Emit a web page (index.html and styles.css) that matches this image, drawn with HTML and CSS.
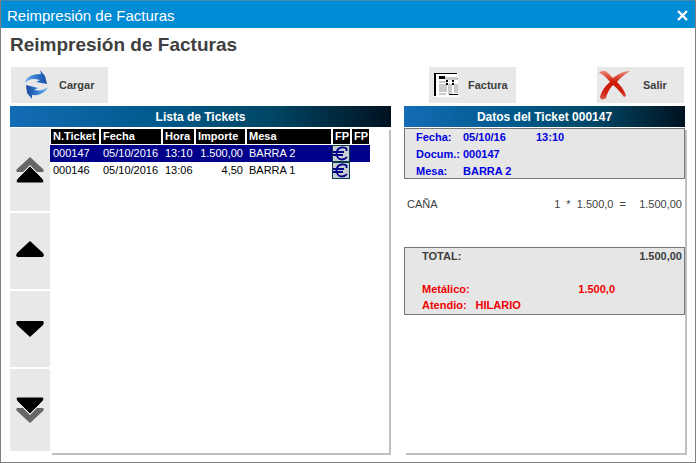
FILE: index.html
```html
<!DOCTYPE html>
<html lang="es">
<head>
    <meta charset="UTF-8">
    <meta name="viewport" content="width=device-width, initial-scale=1.0">
    <title>Reimpresión de Facturas</title>
    <link rel="stylesheet" href="styles.css">
</head>
<body>
    <div class="window">
        <header class="titlebar">
            <span>Reimpresión de Facturas</span>
            <button class="close" type="button" aria-label="Cerrar">
                <svg width="11" height="11" viewBox="0 0 11 11"><path d="M1 1L10 10M10 1L1 10" stroke="#fff" stroke-width="2.4"/></svg>
            </button>
        </header>

        <main class="content">
            <h1>Reimpresión de Facturas</h1>

            <div class="tools">
                <button class="tool tool-wide" type="button">
                    <svg width="24" height="30" viewBox="0 0 24 30">
                        <defs>
                            <linearGradient id="blueTop" x1="0" y1="0" x2="1" y2="0">
                                <stop offset="0" stop-color="#6db4ee"/>
                                <stop offset="0.6" stop-color="#2b6cc4"/>
                                <stop offset="1" stop-color="#1c4fa6"/>
                            </linearGradient>
                            <linearGradient id="blueBottom" x1="0" y1="0" x2="1" y2="0">
                                <stop offset="0" stop-color="#1b4a9c"/>
                                <stop offset="0.5" stop-color="#2f7ad0"/>
                                <stop offset="1" stop-color="#7cc0f4"/>
                            </linearGradient>
                        </defs>
                        <path d="M0 13C1 7 7 4 16 4L15 0L20 6L22 14L11 12L15 10C8 8 4 9 0 13Z" fill="url(#blueTop)"/>
                        <path d="M23 17C21 22 15 26 7 25L7 29L2 23L1 15L13 18L9 20C15 21 19 20 23 17Z" fill="url(#blueBottom)"/>
                    </svg>
                    <span>Cargar</span>
                </button>
            </div>
            <div class="tools tools-right">
                <button class="tool tool-invoice" type="button">
                    <svg width="24" height="24" viewBox="0 0 24 24" shape-rendering="crispEdges">
                        <path d="M0 0H24V24H0Z" fill="#fff"/>
                        <path d="M11 4H24V7H11ZM5 8H12V10H5ZM5 11H13V19H5ZM5 20H12V22H5ZM14 11H18V21H14ZM20 11H24V20H20Z" fill="#cacaca"/>
                        <path d="M0 0H23V1H2V23H0ZM5 3H11V6H5ZM12 7H14V9H12ZM12 10H14V12H12ZM18 7H20V9H18ZM18 10H20V12H18ZM15 21H24V22H15Z" fill="#000"/>
                    </svg>
                    <span>Factura</span>
                </button>
                <button class="tool tool-exit" type="button">
                    <svg width="32" height="30" viewBox="0 0 32 30">
                        <defs>
                            <linearGradient id="red" x1="0" y1="0" x2="0" y2="1">
                                <stop offset="0" stop-color="#ee8b7c"/>
                                <stop offset="0.4" stop-color="#cf1705"/>
                                <stop offset="0.75" stop-color="#d22414"/>
                                <stop offset="1" stop-color="#dc5a4e"/>
                            </linearGradient>
                        </defs>
                        <path d="M0 3C3 0 6 0 9 3L14 8C19 4 25 1 31 1C26 4 21 8 18 12C22 16 26 21 27 26L25 27C22 23 18 18 14 15C10 19 8 24 7 28C5 30 1 30 1 27C3 20 7 15 11 12C8 8 4 4 0 3Z" fill="url(#red)"/>
                    </svg>
                    <span>Salir</span>
                </button>
            </div>

            <section class="pane">
                <h2>Lista de Tickets</h2>
                <div class="list">
                    <nav class="scroll">
                        <button type="button" aria-label="Primero">
                            <svg width="30" height="28" viewBox="0 0 30 28">
                                <path d="M15 1L28 13Q30 16 27 16H22L15 9L8 16H3Q0 16 2 13Z" fill="#666"/>
                                <path d="M15 10L28 23Q30 27 27 27H3Q0 27 2 23Z" stroke="#e8e8e8"/>
                            </svg>
                        </button>
                        <button type="button" aria-label="Anterior">
                            <svg width="30" height="20" viewBox="0 0 30 20"><path d="M15 0L28 12Q30 16 27 16H3Q0 16 2 12Z"/></svg>
                        </button>
                        <button type="button" aria-label="Siguiente">
                            <svg width="30" height="16" viewBox="0 0 30 16"><path d="M15 16L28 4Q30 0 27 0H3Q0 0 2 4Z"/></svg>
                        </button>
                        <button type="button" aria-label="Último">
                            <svg width="30" height="28" viewBox="0 0 30 28">
                                <path d="M15 27L28 15Q30 12 27 12H22L15 19L8 12H3Q0 12 2 15Z" fill="#666"/>
                                <path d="M15 18L28 5Q30 1 27 1H3Q0 1 2 5Z" stroke="#e8e8e8"/>
                            </svg>
                        </button>
                    </nav>
                    <div class="sheet">
                        <svg width="0" height="0" class="symbols">
                            <symbol id="euro" viewBox="0 0 18 17">
                                <rect x="0.5" y="0.5" width="17" height="16" fill="#c9cdd2" stroke="#0b3c4c"/>
                                <path d="M14.500 6V3.500Q12 2 9.500 2.500Q5 3 4.500 8.500Q5 14 9.500 14.500Q13 14.500 15 12M1 7H12M1 10H11" fill="none" stroke="#00008b" stroke-width="1.800"/>
                            </symbol>
                        </svg>
                        <table class="tickets">
                            <colgroup>
                                <col class="c-ticket"><col class="c-date"><col class="c-hour"><col class="c-amount"><col class="c-table"><col class="c-fp"><col class="c-fp">
                            </colgroup>
                            <thead>
                                <tr><th>N.Ticket</th><th>Fecha</th><th>Hora</th><th>Importe</th><th>Mesa</th><th>FP</th><th>FP</th></tr>
                            </thead>
                            <tbody>
                                <tr class="selected">
                                    <td>000147</td><td>05/10/2016</td><td>13:10</td><td class="num">1.500,00</td><td>BARRA 2</td>
                                    <td class="fp"><svg width="18" height="17"><use href="#euro"/></svg></td><td></td>
                                </tr>
                                <tr>
                                    <td>000146</td><td>05/10/2016</td><td>13:06</td><td class="num">4,50</td><td>BARRA 1</td>
                                    <td class="fp"><svg width="18" height="17"><use href="#euro"/></svg></td><td></td>
                                </tr>
                            </tbody>
                        </table>
                    </div>
                </div>
            </section>

            <section class="pane">
                <h2>Datos del Ticket 000147</h2>
                <div class="receipt">
                    <dl class="box info">
                        <dt>Fecha:</dt><dd>05/10/16</dd><dd>13:10</dd>
                        <dt>Docum.:</dt><dd class="wide">000147</dd>
                        <dt>Mesa:</dt><dd class="wide">BARRA 2</dd>
                    </dl>
                    <div class="line">
                        <span>CAÑA</span>
                        <span class="qty">1 &nbsp;* &nbsp;1.500,0 &nbsp;=</span>
                        <span class="sum">1.500,00</span>
                    </div>
                    <div class="box totals">
                        <div class="total"><span>TOTAL:</span><span>1.500,00</span></div>
                        <div class="paid"><span>Metálico:</span><span>1.500,0</span></div>
                        <div class="served"><span>Atendio:</span><span>HILARIO</span></div>
                    </div>
                </div>
            </section>
        </main>
    </div>
</body>
</html>
```
FILE: styles.css
```css
* {
    margin: 0;
    padding: 0;
    box-sizing: border-box;
}

body {
    font-family: "Liberation Sans", Arial, sans-serif;
    font-size: 11px;
    line-height: 17px;
    color: #000;
    background: #fff;
}

button {
    border: none;
    font: inherit;
    color: inherit;
    background: #e8e8e8;
    cursor: pointer;
}

svg {
    display: block;
    flex: none;
}

.window {
    display: flex;
    flex-direction: column;
    min-height: 100vh;
    border: 1px solid #7f7f7f;
    border-top-color: #4a88ad;
}

.titlebar {
    display: flex;
    justify-content: space-between;
    align-items: center;
    height: 27px;
    padding: 2px 7px 0 6px;
    background: #008bd5;
    color: #fff;
    font-size: 15px;
}

.close {
    background: none;
}

.content {
    flex: 1;
    display: grid;
    grid-template-columns: 381fr 281fr;
    grid-template-rows: auto auto 1fr;
    column-gap: 13px;
    padding: 0 10px 9px 9px;
}

h1 {
    grid-column: 1 / -1;
    height: 39px;
    padding-top: 5px;
    font-size: 19px;
    line-height: 24px;
    color: #404040;
}

.tools {
    display: flex;
    padding: 0 1px 3px;
}

.tools-right {
    justify-content: space-between;
    padding-left: 25px;
}

.tool {
    display: flex;
    align-items: center;
    width: 87px;
    height: 36px;
    font-weight: bold;
    color: #404040;
}

.tool-wide {
    width: 97px;
    gap: 10px;
    padding-left: 14px;
}

.tool-invoice {
    gap: 10px;
    padding-left: 5px;
}

.tool-exit {
    gap: 12px;
    padding-left: 2px;
}

.pane {
    display: flex;
    flex-direction: column;
}

h2 {
    margin-bottom: 1px;
    padding-top: 1px;
    font-size: 12px;
    line-height: 20px;
    text-align: center;
    color: #fff;
    background: linear-gradient(90deg, #146cb5, #005a8c 38%, #004766 68%, #001220);
}

.list {
    flex: 1;
    display: flex;
    padding-right: 2px;
}

.scroll {
    display: grid;
    grid-template-rows: 83fr 76fr 76fr 82fr;
    gap: 2px;
    width: 40px;
    padding-bottom: 2px;
}

.scroll button {
    display: flex;
    align-items: center;
    justify-content: center;
}

.sheet,
.receipt {
    flex: 1;
    background: #fff;
    box-shadow: 2px 2px 0 #c0c0c0;
}

.symbols {
    position: absolute;
}

.tickets {
    width: 320px;
    table-layout: fixed;
    border-collapse: separate;
    border-spacing: 0;
    white-space: nowrap;
}

.c-ticket { width: 50px; }
.c-date { width: 62px; }
.c-hour { width: 33px; }
.c-amount { width: 51px; }
.c-table { width: 86px; }
.c-fp { width: 19px; }

.tickets th {
    height: 17px;
    padding-left: 2px;
    line-height: 15px;
    text-align: left;
    color: #fff;
    background: #000;
    background-clip: padding-box;
    border: 1px solid #fff;
}

.tickets td {
    height: 17px;
    padding: 0 3px;
}

.tickets .num {
    text-align: right;
}

.tickets .fp {
    padding: 0;
}

.selected {
    color: #fff;
    background: #00008b;
}

.box {
    font-weight: bold;
    background: #e6e6e6;
    border: 1px solid #777;
}

.info {
    display: grid;
    grid-template-columns: 47px 73px 1fr;
    grid-auto-rows: 17px;
    height: 51px;
    padding-left: 11px;
    line-height: 16px;
    color: #0000e0;
}

.wide {
    grid-column: span 2;
}

.line {
    display: flex;
    height: 68px;
    padding: 17px 3px 0;
    color: #404040;
}

.qty {
    margin-left: auto;
}

.sum {
    width: 56px;
    text-align: right;
}

.totals {
    height: 68px;
    padding: 0 2px 0 17px;
    line-height: 16px;
    color: #f00000;
}

.total {
    display: flex;
    justify-content: space-between;
    padding-bottom: 17px;
    color: #404040;
}

.paid {
    display: flex;
    justify-content: space-between;
    padding-right: 67px;
}

.served {
    display: flex;
    gap: 9px;
}
```
